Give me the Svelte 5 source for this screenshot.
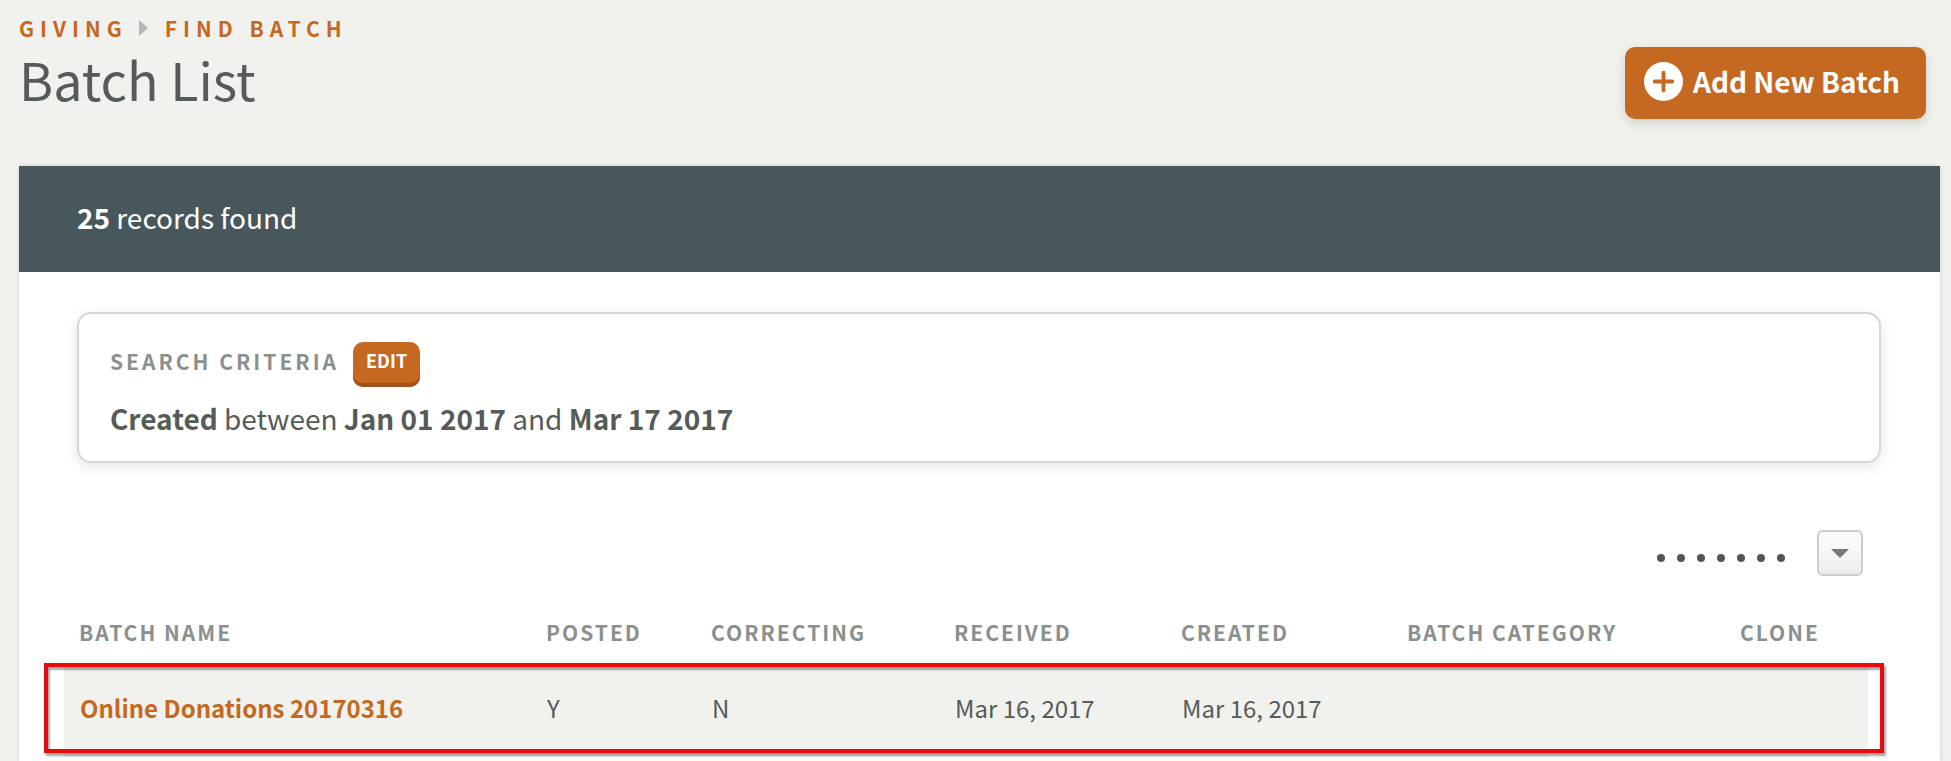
<script lang="ts">
  const columns = [
    { label: 'Batch Name', width: 467 },
    { label: 'Posted', width: 165 },
    { label: 'Correcting', width: 243 },
    { label: 'Received', width: 227 },
    { label: 'Created', width: 226 },
    { label: 'Batch Category', width: 333 },
    { label: 'Clone', width: 143 },
  ];
  const total = columns.reduce((sum, column) => sum + column.width, 0);

  const batches = [
    {
      name: 'Online Donations 20170316',
      posted: 'Y',
      correcting: 'N',
      received: 'Mar 16, 2017',
      created: 'Mar 16, 2017',
      category: '',
    },
  ];
</script>

<div class="page">
  <header>
    <div>
      <nav aria-label="Breadcrumb">
        <a href="#giving">Giving</a>
        <svg class="arrow" viewBox="0 0 9 16" aria-hidden="true"><path d="M0 0L9 8L0 16Z" /></svg>
        <a href="#find-batch">Find Batch</a>
      </nav>
      <h1>Batch List</h1>
    </div>
    <button class="add">
      <svg viewBox="0 0 40 40" aria-hidden="true">
        <circle cx="20" cy="20" r="20" fill="#fff" />
        <path d="M20 11V29M11 20H29" stroke="#c56822" stroke-width="4" stroke-linecap="round" />
      </svg>
      Add New Batch
    </button>
  </header>

  <main>
    <div class="banner"><strong>25</strong> records found</div>

    <section class="criteria">
      <div class="criteria-head">
        <h2>Search Criteria</h2>
        <button class="edit">Edit</button>
      </div>
      <p><strong>Created</strong> between <strong>Jan 01 2017</strong> and <strong>Mar 17 2017</strong></p>
    </section>

    <div class="tools">
      <div class="dots" aria-hidden="true">
        {#each { length: 7 } as _}
          <span></span>
        {/each}
      </div>
      <button class="menu" aria-label="List options">
        <svg viewBox="0 0 18 9" aria-hidden="true"><path d="M0 0H18L9 9Z" /></svg>
      </button>
    </div>

    <div class="table-wrap">
      <table>
        <colgroup>
          {#each columns as column}
            <col style="width: {(column.width / total) * 100}%" />
          {/each}
        </colgroup>
        <thead>
          <tr>
            {#each columns as column}
              <th scope="col">{column.label}</th>
            {/each}
          </tr>
        </thead>
        <tbody>
          {#each batches as batch}
            <tr>
              <td><a href="#batch">{batch.name}</a></td>
              <td>{batch.posted}</td>
              <td>{batch.correcting}</td>
              <td>{batch.received}</td>
              <td>{batch.created}</td>
              <td>{batch.category}</td>
              <td></td>
            </tr>
          {/each}
        </tbody>
      </table>
      <div class="highlight"></div>
    </div>
  </main>
</div>

<style>
  :global(body) {
    background: #f1f2ee;
  }

  .page {
    box-sizing: border-box;
    height: 100vh;
    display: flex;
    flex-direction: column;
    overflow: hidden;
    padding: 0 11px 0 19px;
    color: #555b57;
    font-family: 'Noto Sans CJK SC', 'Open Sans', sans-serif;
  }

  button {
    border: none;
    font-family: inherit;
    font-weight: 700;
    color: #fff;
    background: #c56822;
    cursor: pointer;
  }

  a {
    color: #c56822;
    font-weight: 700;
    text-decoration: none;
  }

  h1,
  h2,
  p {
    margin: 0;
  }

  header {
    display: flex;
    justify-content: space-between;
    align-items: flex-start;
    height: 166px;
    flex: none;
  }

  nav {
    display: flex;
    align-items: center;
    gap: 11px;
    margin-top: 14px;
    font-size: 21px;
    line-height: 28px;
    letter-spacing: 6px;
    text-transform: uppercase;
  }

  .arrow {
    width: 9px;
    height: 16px;
    margin-right: 6px;
    fill: #b3b7b4;
  }

  h1 {
    margin-top: 5px;
    font-size: 52px;
    line-height: 64px;
    font-weight: 400;
  }

  .add {
    display: flex;
    align-items: center;
    gap: 10px;
    margin: 47px 14px 0 0;
    padding: 0 26px 4px 19px;
    font-size: 28px;
    line-height: 68px;
    border-radius: 10px;
    box-shadow: 0 4px 12px rgba(0, 0, 0, 0.14);
  }

  .add svg {
    width: 39px;
    height: 39px;
  }

  main {
    flex: 1;
    background: #fff;
    box-shadow: 0 0 4px rgba(0, 0, 0, 0.15);
  }

  .banner {
    padding: 0 58px 4px;
    color: #fff;
    background: #47575c;
    font-size: 28px;
    line-height: 102px;
  }

  .criteria {
    margin: 40px 59px 0 58px;
    padding: 28px 31px 22px;
    border: 2px solid #d5d7d6;
    border-radius: 14px;
    box-shadow: 0 4px 14px rgba(0, 0, 0, 0.1);
  }

  .criteria-head {
    display: flex;
    align-items: flex-start;
    gap: 14px;
  }

  h2,
  th {
    color: #8a908d;
    font-size: 21px;
    font-weight: 700;
    text-transform: uppercase;
  }

  h2 {
    line-height: 38px;
    letter-spacing: 3px;
  }

  .edit {
    padding: 0 13px 9px;
    font-size: 18px;
    line-height: 36px;
    text-transform: uppercase;
    border-radius: 10px;
    box-shadow: inset 0 -4px #a35219;
  }

  .criteria p {
    margin-top: 10px;
    font-size: 28px;
    line-height: 42px;
  }

  .tools {
    display: flex;
    justify-content: flex-end;
    align-items: center;
    gap: 32px;
    margin: 67px 77px 0 0;
  }

  .dots {
    display: flex;
    gap: 12px;
    padding-top: 10px;
  }

  .dots span {
    width: 8px;
    height: 8px;
    border-radius: 50%;
    background: #555;
  }

  .menu {
    display: grid;
    place-items: center;
    width: 46px;
    height: 46px;
    padding: 0;
    border: 2px solid #ccc;
    border-radius: 6px;
    background: linear-gradient(#fcfcfc, #f6f6f6 50%, #ececec);
  }

  .menu svg {
    width: 18px;
    height: 9px;
    fill: #777;
  }

  .table-wrap {
    position: relative;
    margin: 27px 72px 0 45px;
  }

  table {
    width: 100%;
    table-layout: fixed;
    border-collapse: collapse;
  }

  th,
  td {
    text-align: left;
    white-space: nowrap;
  }

  th {
    height: 58px;
    padding: 0 0 2px 15px;
    letter-spacing: 2px;
  }

  td {
    height: 88px;
    padding: 0 0 6px 16px;
    font-size: 24px;
    background: #f1f2ee;
  }

  /* callout frame around the newest batch */
  .highlight {
    position: absolute;
    inset: 60px -16px 4px -20px;
    border: 4px solid #ea0a0e;
    box-shadow:
      2px 3px 2px rgba(0, 0, 0, 0.35),
      inset 2px 3px 2px rgba(0, 0, 0, 0.35);
    pointer-events: none;
  }
</style>
